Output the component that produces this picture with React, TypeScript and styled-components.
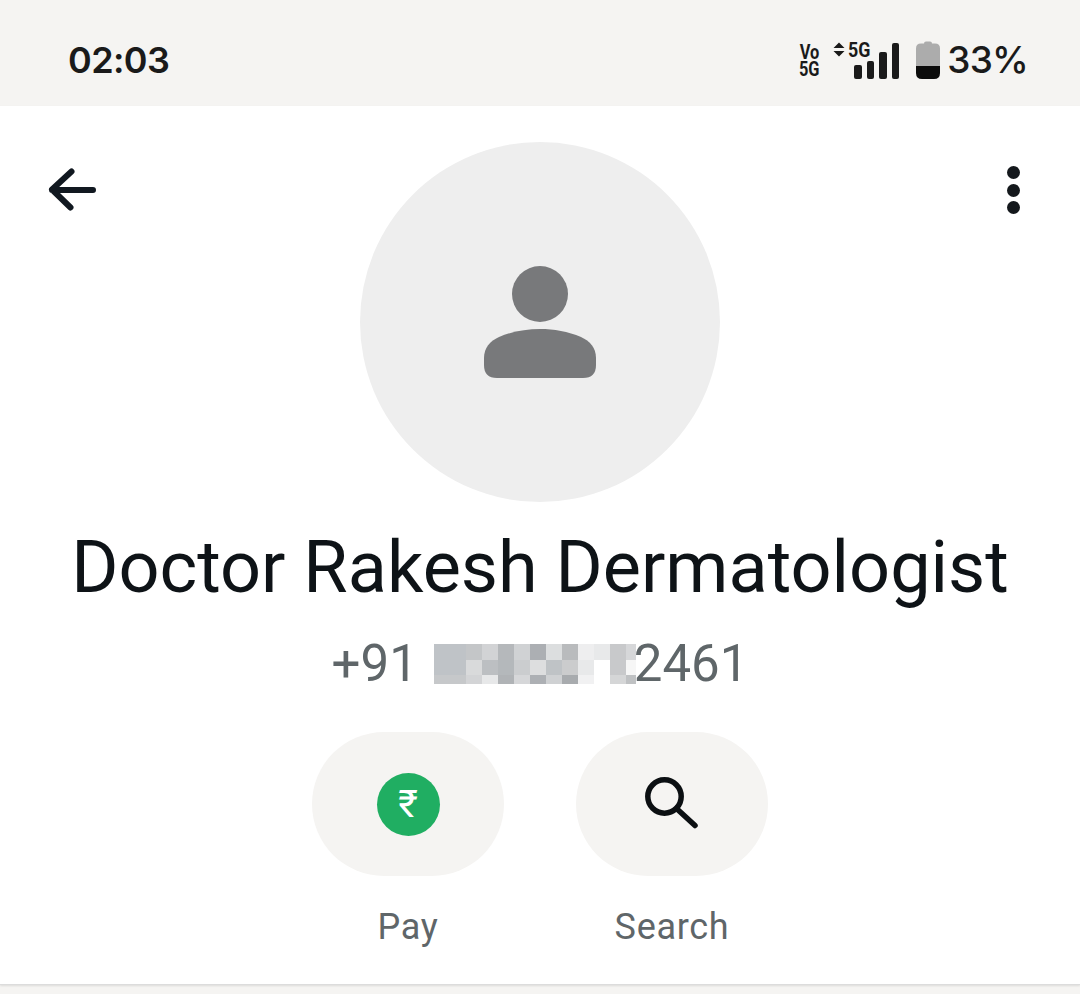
import React from 'react';
import styled, { createGlobalStyle } from 'styled-components';

const GlobalStyle = createGlobalStyle`
  html, body {
    margin: 0;
    padding: 0;
    background: #f5f4f2;
  }
  * {
    box-sizing: border-box;
  }
`;

// colours of the masked part of the phone number, row by row
const maskRows = [
  ['#bfc3c7', '#bfc3c7', '#c4c6c8', '#d2d3d5', '#b5b8bb', '#d0d2d4', '#acafb3', '#dcdedf', '#b9bbbd', '#eeeeef', '#e8e9ea', '#c8c9cb', '#d6d7d9'],
  ['#bfc3c7', '#bfc3c7', '#d9dadb', '#bcbfc2', '#b4b8bb', '#cbcdcf', '#dddedf', '#bfc3c6', '#cbcccd', '#e8e9ea', '#ffffff', '#c8c9cb', '#f6f6f6'],
  ['#c6c8ca', '#c6c8ca', '#d3d4d6', '#e7e8e9', '#b0b3b6', '#d6d7d9', '#adb0b4', '#cfd1d3', '#a8abae', '#f1f1f2', '#ffffff', '#d5d6d7', '#bfc1c3'],
];

const signalBars = [14, 18, 27, 36];

const App = () => {
  return (
    <>
      <GlobalStyle />
      <Page>
        <StatusBar>
          <Time>02:03</Time>
          <StatusIcons>
            <VoLte>
              <VoLine>Vo</VoLine>
              <VoLine>5G</VoLine>
            </VoLte>
            <Network>
              <svg width="12" height="15" viewBox="0 0 12 15">
                <path d="M6 0.500 L11.500 6 H0.500 Z M0.500 9 H11.500 L6 14.500 Z" fill="#1a1a1a" />
              </svg>
              <NetworkLabel>5G</NetworkLabel>
            </Network>
            <Signal>
              {signalBars.map((h) => (
                <SignalBar key={h} $height={h} />
              ))}
            </Signal>
            <svg width="24" height="38" viewBox="0 0 24 38">
              <path
                d="M8 2.500 Q8 0.500 10 0.500 H14 Q16 0.500 16 2.500 H19 Q24 2.500 24 7.500 V25 H0 V7.500 Q0 2.500 5 2.500 Z"
                fill="#acacac"
              />
              <path d="M0 25 H24 V32 Q24 38 18 38 H6 Q0 38 0 32 Z" fill="#0c0c0c" />
            </svg>
            <Battery>33%</Battery>
          </StatusIcons>
        </StatusBar>

        <Sheet>
          <Header>
            <IconSlot>
              <svg width="50" height="48" viewBox="0 0 50 48" fill="none">
                <path
                  d="M46 24 H5 M24.500 5.500 L5 23.500 L23.500 41.500"
                  stroke="#111820"
                  strokeWidth="6"
                  strokeLinecap="round"
                  strokeLinejoin="round"
                />
              </svg>
            </IconSlot>
            <Avatar>
              <svg width="112" height="112" viewBox="0 0 112 112" fill="#78797b">
                <circle cx="56" cy="28" r="28" />
                <path d="M0 92 C0 82 6 75 15 71 C28 65.500 42 63 56 63 C70 63 84 65.500 97 71 C106 75 112 82 112 92 V99 Q112 112 99 112 H13 Q0 112 0 99 Z" />
              </svg>
            </Avatar>
            <MenuSlot>
              <MenuDot />
              <MenuDot />
              <MenuDot />
            </MenuSlot>
          </Header>

          <Name>Doctor Rakesh Dermatologist</Name>

          <Phone>
            <span>+91</span>
            <Mask>
              {maskRows.flat().map((color, i) => (
                <MaskCell key={i} style={{ background: color }} />
              ))}
            </Mask>
            <span>2461</span>
          </Phone>

          <Actions>
            <Action>
              <ActionButton>
                <RupeeBadge>₹</RupeeBadge>
              </ActionButton>
              <ActionLabel>Pay</ActionLabel>
            </Action>
            <Action>
              <ActionButton>
                <svg width="54" height="54" viewBox="0 0 54 54" fill="none">
                  <circle cx="19.500" cy="19.500" r="16.700" stroke="#0b0f12" strokeWidth="5.500" />
                  <path d="M31.500 31.500 L50 48.500" stroke="#0b0f12" strokeWidth="5.500" strokeLinecap="round" />
                </svg>
              </ActionButton>
              <ActionLabel>Search</ActionLabel>
            </Action>
          </Actions>
        </Sheet>
      </Page>
    </>
  );
};

export default App;

const Page = styled.div`
  width: 1080px;
  height: 994px;
  overflow: hidden;
  background: #f5f4f2;
  display: flex;
  flex-direction: column;
`;

const StatusBar = styled.div`
  height: 106px;
  flex: none;
  background: #f5f4f2;
  display: flex;
  align-items: center;
  justify-content: space-between;
  padding: 14px 52px 0 68px;
`;

const Time = styled.div`
  font-family: 'Inter', sans-serif;
  font-size: 36px;
  letter-spacing: -0.6px;
  font-weight: 600;
  color: #1a1a1a;
`;

const StatusIcons = styled.div`
  display: flex;
  align-items: flex-end;
  height: 38px;
`;

const VoLte = styled.div`
  display: flex;
  flex-direction: column;
  align-items: center;
  width: 20px;
  height: 34px;
  margin-right: 14px;
  margin-bottom: 1px;
  font-family: 'Roboto', sans-serif;
  font-weight: 700;
  color: #1a1a1a;
`;

const VoLine = styled.span`
  font-size: 21px;
  line-height: 17px;
  transform: scaleX(0.78);
`;

const Network = styled.div`
  align-self: flex-start;
  display: flex;
  align-items: flex-start;
  gap: 3px;
  width: 46px;
  height: 38px;
  margin-right: -25px;
  padding-top: 1px;
`;

const NetworkLabel = styled.span`
  font-family: 'Roboto', sans-serif;
  font-size: 21px;
  line-height: 16px;
  font-weight: 700;
  color: #1a1a1a;
  transform: scaleX(0.85);
  transform-origin: left;
`;

const Signal = styled.div`
  display: flex;
  align-items: flex-end;
  gap: 5px;
  margin-right: 17px;
`;

const SignalBar = styled.div<{ $height: number }>`
  width: 7.5px;
  height: ${(p) => p.$height}px;
  border-radius: 2px;
  background: #1a1a1a;
`;

const Battery = styled.div`
  margin-left: 7px;
  font-family: 'Inter', sans-serif;
  font-size: 37px;
  line-height: 38px;
  letter-spacing: -0.8px;
  font-weight: 500;
  color: #1a1a1a;
`;

const Sheet = styled.div`
  height: 879px;
  flex: none;
  background: #fff;
  border-bottom: 1px solid #dcdcdc;
  box-shadow: 0 1px 2px rgba(0, 0, 0, 0.1);
  display: flex;
  flex-direction: column;
  align-items: center;
  padding-top: 36px;
`;

const Header = styled.div`
  width: 100%;
  display: grid;
  grid-template-columns: 1fr 360px 1fr;
  padding: 0 60px 0 47px;
`;

const IconSlot = styled.div`
  padding-top: 24px;
`;

const MenuSlot = styled.div`
  justify-self: end;
  display: flex;
  flex-direction: column;
  gap: 4.5px;
  padding-top: 24px;
`;

const MenuDot = styled.div`
  width: 13px;
  height: 13px;
  border-radius: 50%;
  background: #14181c;
`;

const Avatar = styled.div`
  width: 360px;
  height: 360px;
  margin-left: 6.5px;
  border-radius: 50%;
  background: #eeeeee;
  display: flex;
  align-items: center;
  justify-content: center;
`;

const Name = styled.h1`
  margin: 24px 0 0;
  font-family: 'Roboto', sans-serif;
  font-size: 72px;
  line-height: 84px;
  font-weight: 400;
  color: #0e1317;
  white-space: nowrap;
`;

const Phone = styled.div`
  display: flex;
  align-items: center;
  margin-top: 24px;
  height: 60px;
  font-family: 'Roboto', sans-serif;
  font-size: 51px;
  line-height: 60px;
  color: #5f6669;
`;

const Mask = styled.div`
  width: 202px;
  height: 40px;
  margin: 0 -2px 0 16px;
  display: grid;
  grid-template-columns: repeat(12, 16px) 10px;
  grid-template-rows: 16px 15px 9px;
`;

const MaskCell = styled.div``;

const Actions = styled.div`
  display: flex;
  gap: 72px;
  margin-top: 38px;
`;

const Action = styled.div`
  display: flex;
  flex-direction: column;
  align-items: center;
`;

const ActionButton = styled.div`
  width: 192px;
  height: 144px;
  border-radius: 72px;
  background: #f5f4f2;
  display: flex;
  align-items: center;
  justify-content: center;
`;

const RupeeBadge = styled.div`
  width: 63px;
  height: 63px;
  border-radius: 50%;
  background: #20ae62;
  color: #fff;
  display: flex;
  align-items: center;
  justify-content: center;
  font-family: 'Roboto', sans-serif;
  font-size: 38px;
  font-weight: 400;
`;

const ActionLabel = styled.div`
  margin-top: 29px;
  font-family: 'Roboto', sans-serif;
  font-size: 36px;
  line-height: 44px;
  letter-spacing: 0.7px;
  color: #5f6669;
`;
